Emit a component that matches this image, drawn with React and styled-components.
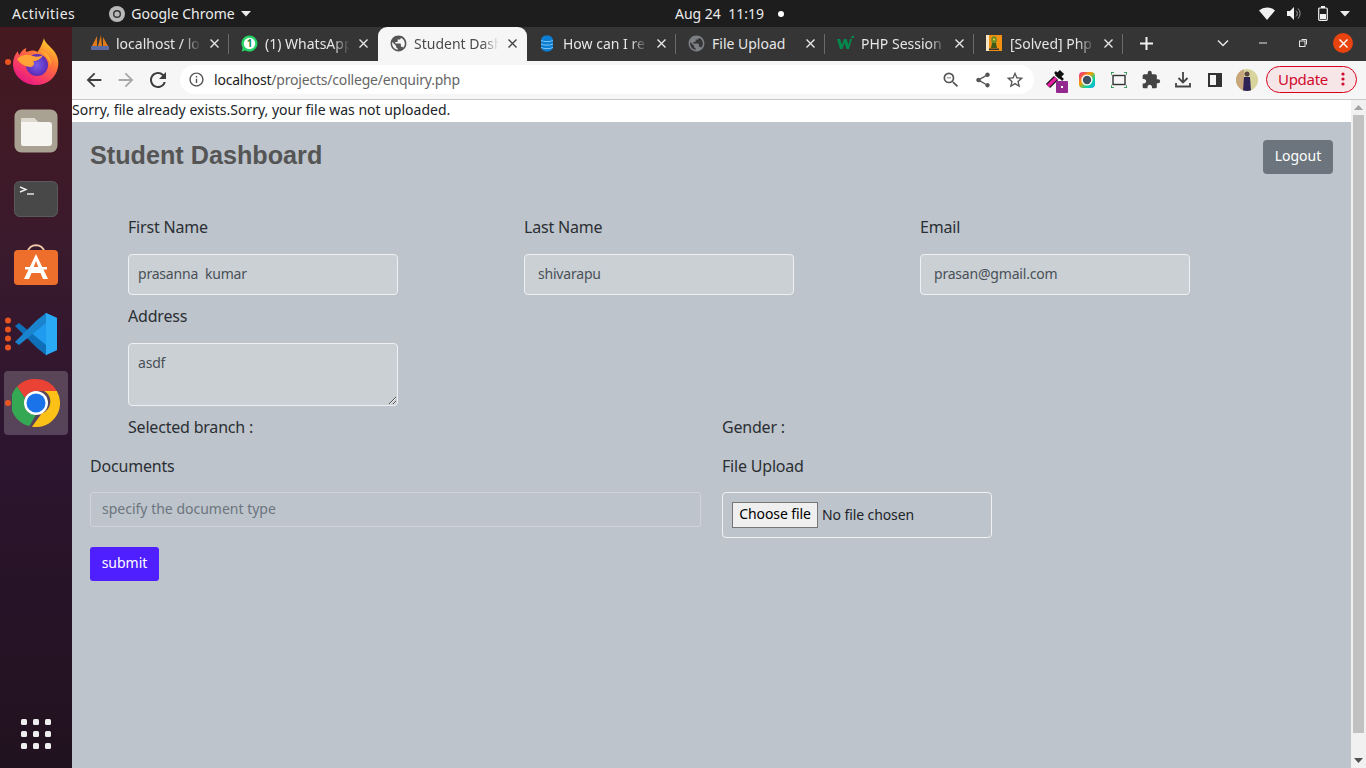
import React from 'react';
import styled, { createGlobalStyle } from 'styled-components';
import { MdExtension, MdRefresh, MdArrowBack, MdArrowForward, MdStarBorder, MdZoomOut, MdShare, MdPublic, MdInfoOutline } from 'react-icons/md';

const UI = '"Noto Sans", sans-serif';

const Global = createGlobalStyle`
  html, body { margin: 0; padding: 0; width: 1366px; height: 768px; overflow: hidden; background: #bdc4cc; }
  * { box-sizing: border-box; }
  body { font-family: ${UI}; }
`;

const Screen = styled.div`
  width: 1366px; height: 768px; display: flex; flex-direction: column; overflow: hidden;
`;
const TopBar = styled.header`
  height: 27px; flex: none; background: #1d1d1d; color: #ececec; font-size: 14px;
  display: grid; grid-template-columns: 663px auto 1fr; align-items: center; padding: 0 13px 0 12px;
`;
const TopLeft = styled.div`display: flex; align-items: center;`;
const Activities = styled.span`letter-spacing: 0.5px;`;
const AppMenu = styled.div`display: flex; align-items: center; gap: 6px; margin-left: 34px;`;
const Clock = styled.div`display: flex; align-items: center; gap: 14px; white-space: pre;`;
const Dot = styled.span`width: 6px; height: 6px; border-radius: 50%; background: #fff;`;
const Tray = styled.div`display: flex; align-items: center; justify-content: flex-end;`;
const TrayCell = styled.div`width: ${p => p.$w ?? 28}px; display: flex; justify-content: center; align-items: center;`;

const Below = styled.div`flex: 1; display: flex; min-height: 0;`;
const Dock = styled.aside`
  width: 72px; flex: none; display: flex; flex-direction: column; align-items: center;
  background: linear-gradient(180deg, #45191f 0%, #3a1a2d 30%, #2d1530 55%, #21121f 100%);
  padding-top: 3px; position: relative;
`;
const DockItem = styled.div`
  width: 64px; height: 64px; margin-bottom: ${p => p.$gap ?? 4}px; border-radius: 4px; display: flex; align-items: center; justify-content: center;
  padding-top: ${p => p.$nudge ?? 0}px;
  background: ${p => p.$active ? 'rgba(255,255,255,0.2)' : 'transparent'}; position: relative;
`;
const Pips = styled.div`
  position: absolute; left: 1px; top: 50%; transform: translateY(-50%); display: flex; flex-direction: column; gap: 3px;
`;
const Pip = styled.span`width: 6px; height: 6px; border-radius: 50%; background: #e95420;`;
const Grid9 = styled.div`
  margin-top: auto; margin-bottom: 19px; display: grid; grid-template-columns: repeat(3, 6px); gap: 6px;
`;
const GridDot = styled.span`width: 6px; height: 6px; border-radius: 1.5px; background: #eeeeee;`;

const Browser = styled.div`flex: 1; min-width: 0; display: flex; flex-direction: column;`;
const TabStrip = styled.div`
  height: 34px; flex: none; background: #353535; display: flex; align-items: stretch; padding-left: 8px; position: relative;
`;
const Tab = styled.div`
  width: 149px; flex: none; display: flex; align-items: center; padding: 0 9px 2px 12px; gap: 8px; font-size: 14px;
  color: ${p => p.$active ? '#4a4a4a' : '#e6e6e6'};
  background: ${p => p.$active ? '#f6f6f6' : 'transparent'};
  border-radius: ${p => p.$active ? '9px 9px 0 0' : '0'};
  position: relative;
  &::after {
    content: ''; display: ${p => p.$sep ? 'block' : 'none'}; position: absolute; right: 0; top: 7px; bottom: 7px; width: 1px; background: #6a6a6a;
  }
`;
const TabIcon = styled.span`
  width: 16px; height: 16px; flex: none; display: flex; align-items: center; justify-content: center; color: ${p => p.$c ?? '#555'};
  & > svg { flex: none; }
`;
const TabTitle = styled.span`
  flex: 1; overflow: hidden; white-space: nowrap; min-width: 0;
  ${p => p.$fade ? `-webkit-mask-image: linear-gradient(90deg, #000 80%, transparent 100%); mask-image: linear-gradient(90deg, #000 80%, transparent 100%);` : ''}
`;
const TabClose = styled.span`width: 11px; height: 11px; flex: none; display: flex;`;
const NewTab = styled.div`width: 46px; display: flex; align-items: center; justify-content: center; padding-bottom: 2px;`;
const WinControls = styled.div`
  margin-left: auto; display: flex; align-items: center; padding: 0 13px 2px 0;
`;
const WinBtn = styled.div`width: 40px; display: flex; align-items: center; justify-content: center;`;
const CloseCircle = styled.div`
  width: 20px; height: 20px; border-radius: 50%; background: #e9430f; display: flex; align-items: center; justify-content: center; margin-left: 10px;
`;

const Toolbar = styled.div`
  height: 39px; flex: none; background: #f6f6f6; border-bottom: 1px solid #c9c9c9; display: flex; align-items: center; padding: 0 9px 1px 6px;
`;
const NavBtn = styled.div`width: 32px; display: flex; justify-content: center; color: ${p => p.$c ?? '#3c3c3c'};`;
const Omni = styled.div`
  width: 854px; height: 29px; margin-left: 6px; background: #fff; border-radius: 15px; display: flex; align-items: center; padding: 0 9px 0 8px; font-size: 14px; color: #666;
`;
const InfoIcon = styled.span`display: flex; color: #555;`;
const Host = styled.span`color: #1c1c1c;`;
const UrlText = styled.div`margin-left: 9px; flex: 1; letter-spacing: -0.2px; padding-bottom: 1px;`;
const OmniIcons = styled.div`display: flex; gap: 13px; align-items: center; color: #555;`;
const Exts = styled.div`display: flex; align-items: center; margin-left: 5px; color: #444;`;
const ExtCell = styled.div`width: 32px; display: flex; justify-content: center; align-items: center; & > svg { flex: none; }`;
const Avatar = styled.div`width: 22px; height: 22px; border-radius: 50%; overflow: hidden; flex: none; margin-left: 5px;`;
const UpdatePill = styled.div`
  width: 91px; height: 27px; margin-left: 8px; border: 1px solid #d9001b; border-radius: 14px; background: #f7e6e8; color: #cf0a2c;
  display: flex; align-items: center; justify-content: space-between; padding: 0 11px 1px 11px; font-size: 15px; letter-spacing: -0.3px;
`;

const PageArea = styled.div`flex: 1; display: flex; min-height: 0; background: #fff;`;
const PageCol = styled.div`flex: 1; min-width: 0; display: flex; flex-direction: column;`;
const Notice = styled.div`height: 22px; flex: none; background: #fff; color: #212529; font-size: 14px; line-height: 20px; white-space: nowrap;`;
const Content = styled.main`flex: 1; background: #bdc4cc; padding: 18px 18px 0; color: #212529;`;
const HeadRow = styled.div`display: flex; justify-content: space-between; align-items: flex-start; margin-bottom: 41px;`;
const Title = styled.h1`margin: 0; font: bold 25.2px/30px "Liberation Sans", Arial, sans-serif; color: #555555;`;
const LogoutBtn = styled.button`
  width: 70px; height: 34px; border: none; border-radius: 4px; background: #6c757d; color: #fff; font: 14px ${UI}; padding: 0 0 3px; cursor: pointer;
`;
const Fields = styled.div`display: grid; grid-template-columns: repeat(3, 396px); padding-left: 38px;`;
const Field = styled.div`display: flex; flex-direction: column; align-items: flex-start;`;
const Label = styled.label`display: block; font-size: 16px; line-height: 24px; letter-spacing: -0.2px; color: #2b2f33;`;
const TextBox = styled.input`
  width: 270px; height: 41px; margin-top: 15px; margin-bottom: 9px; border: 1px solid #eef0f2; border-radius: 4px; background: #cbd0d5; color: #495057;
  font: 14px ${UI}; letter-spacing: -0.2px; padding: 0 ${p => p.$pad ?? 13}px 3px; outline: none;
`;
const TextArea = styled.textarea`
  width: 270px; height: 63px; margin-top: 15px; display: block; border: 1px solid #eef0f2; border-radius: 4px; background: #cbd0d5; color: #495057;
  font: 14px/21px ${UI}; padding: 8px 9px; outline: none; letter-spacing: -0.2px;
`;
const InfoRow = styled.div`display: grid; grid-template-columns: 632px 1fr; margin-top: 9px;`;
const InfoLabel = styled(Label)`padding-left: ${p => p.$indent ?? 0}px;`;
const DocRow = styled.div`display: grid; grid-template-columns: 611px 270px; column-gap: 21px; margin-top: 15px;`;
const DocInput = styled.input`
  width: 611px; height: 35px; margin-top: 14px; border: 1px solid #ced4da; border-radius: 3px; background: #bdc4cc; font: 14px ${UI}; padding: 0 11px 2px; color: #495057; outline: none;
  &::placeholder { color: #6c757d; opacity: 1; }
`;
const FileBox = styled.div`
  width: 270px; height: 46px; margin-top: 14px; border: 1px solid #f0f2f4; border-radius: 4px; display: flex; align-items: center; gap: 4px; padding-left: 9px; font-size: 14px; letter-spacing: -0.1px; color: #212529;
`;
const FileButton = styled.button`
  width: 86px; height: 26px; font: 14px ${UI}; letter-spacing: -0.1px; padding: 0 0 3px; background: #efefef; border: 1px solid #767676; border-radius: 0; color: #000;
`;
const FileName = styled.span`padding-bottom: 2px;`;
const SubmitBtn = styled.button`
  display: block; width: 69px; height: 34px; margin-top: 9px; border: none; border-radius: 3px; background: #4f1fff; color: #fff; font: 14px ${UI}; padding: 0 0 3px;
`;
const Scrollbar = styled.div`width: 15px; flex: none; background: #f1f1f1; display: flex; flex-direction: column; align-items: center;`;
const ScrollArrow = styled.div`height: 15px; width: 15px; flex: none; display: flex; align-items: center; justify-content: center; margin-top: ${p => p.$end ? 'auto' : '0'};`;
const Thumb = styled.div`width: 11px; height: 618px; flex: none; background: #c1c1c1;`;

const X = ({ c = '#e6e6e6' }) => (
  <svg width="11" height="11" viewBox="0 0 11 11"><path d="M1.500 1.500l8 8M9.500 1.500l-8 8" stroke={c} strokeWidth="1.4" /></svg>
);
const PmaIcon = () => (
  <svg width="18" height="16" viewBox="0 0 18 16"><path d="M1 11L6 1v10zM7 11l3-11 1 11zM12 11l0-9 5 9z" fill="#e07a1a" /><rect x="0" y="11" width="18" height="4" fill="#5b6aa0" /></svg>
);
const WaIcon = () => (
  <svg width="17" height="17" viewBox="0 0 17 17"><path d="M8.500 0.500a8 8 0 0 0-6.800 12.200L.6 16.400l3.800-1A8 8 0 1 0 8.500.5z" fill="#25d366" /><circle cx="8.500" cy="8.500" r="5.700" fill="#fff" /><text x="8.500" y="12" textAnchor="middle" fontSize="10" fontWeight="700" fontFamily="Noto Sans" fill="#128c3e">1</text></svg>
);
const DbIcon = () => (
  <svg width="16" height="17" viewBox="0 0 16 17"><rect x="2" y="0.500" width="12" height="16" rx="5" fill="#0c7fd4" /><path d="M2 5.500c3 1.500 9 1.500 12 0M2 9c3 1.500 9 1.500 12 0M2 12.500c3 1.500 9 1.500 12 0" stroke="#7fc4f2" fill="none" /></svg>
);
const W3Icon = () => (
  <svg width="17" height="14" viewBox="0 0 17 14"><path d="M0 3h3l2 6 2-6h2.500l2 6 1.500-6h2l-3 10h-2.500l-2-6-2 6H3z" fill="#04894e" /><rect x="14.500" y="0" width="2.500" height="2" fill="#04894e" /></svg>
);
const SolvedIcon = () => (
  <svg width="16" height="16" viewBox="0 0 16 16"><rect width="16" height="16" fill="#f29111" /><rect width="3" height="16" fill="#f7e6c4" /><ellipse cx="8" cy="5" rx="2.800" ry="3.800" fill="#6a8a28" /><circle cx="8" cy="4.500" r="1" fill="#e8e040" /><path d="M6 8h4l1 5H5z" fill="#3d5a1a" /><rect x="3" y="13.500" width="10" height="1.500" fill="#333" /></svg>
);
const FirefoxIcon = () => (
  <svg width="48" height="48" viewBox="0 0 48 48">
    <defs>
      <linearGradient id="ff1" x1="0.85" y1="0" x2="0.25" y2="1"><stop offset="0" stopColor="#ffe226" /><stop offset=".42" stopColor="#ff7139" /><stop offset=".8" stopColor="#f5306f" /><stop offset="1" stopColor="#e31587" /></linearGradient>
      <radialGradient id="ff2"><stop offset="0" stopColor="#7a5ce8" /><stop offset="1" stopColor="#5b2bb5" /></radialGradient>
    </defs>
    <path d="M32 0c0 4 6 8 10 13 4 5 5 11 4 16-2 11-11 18-22 18C12 47 1 38 1 26c0-5 2-10 5-13 0 2 .5 3 1.500 4 1-3 4-6 7-7-1 2-1 3 0 4 4-2 8-2 11 0 2-3 5-8 6.500-14z" fill="url(#ff1)" />
    <circle cx="25" cy="27" r="11" fill="url(#ff2)" />
    <path d="M5 21c5-5 11-5 16-3 3 1 7 1 10-1-2 4-6 6-10 6 2 2 1 5-2 6-5 0-11-3-14-8z" fill="#ffa436" />
    <path d="M28 13c7 1 12 7 11 16-1-7-5-12-11-16z" fill="#ffb032" />
  </svg>
);
const FilesIcon = () => (
  <svg width="44" height="44" viewBox="0 0 44 44">
    <rect x="0.500" y="0.500" width="43" height="43" rx="7" fill="#a9a292" />
    <path d="M7 11a2 2 0 0 1 2-2h11l4 4h11a3 3 0 0 1 3 3v18a3 3 0 0 1-3 3H9a2 2 0 0 1-2-2z" fill="#f6f5f2" />
    <path d="M7 11a2 2 0 0 1 2-2h11l4 4H7z" fill="#ded9d0" />
  </svg>
);
const TermIcon = () => (
  <svg width="44" height="36" viewBox="0 0 44 36">
    <rect x="0.500" y="0.500" width="43" height="35" rx="5" fill="#484848" stroke="#5a5a5a" />
    <path d="M6 6l6 2.500L6 11" stroke="#eee" strokeWidth="1.400" fill="none" /><path d="M13 13h7" stroke="#eee" strokeWidth="1.400" />
  </svg>
);
const StoreIcon = () => (
  <svg width="44" height="44" viewBox="0 0 44 44">
    <path d="M14 8c0-9 16-9 16 0" stroke="#f0c8a8" strokeWidth="2" fill="none" />
    <rect x="0" y="6" width="44" height="35" rx="4" fill="#ee6f2b" />
    <path d="M22 10L10 35h5l2.500-6h9l2.500 6h5zM19 25l3-8 3 8z" fill="#fff" />
    <rect x="11" y="23" width="22" height="2.500" fill="#fff" />
  </svg>
);
const VSIcon = () => (
  <svg width="44" height="44" viewBox="0 0 44 44">
    <path d="M32 1l11 5v32l-11 5L12 24z" fill="#1f9cf0" />
    <path d="M32 1L32 43 43 38V6z" fill="#2aa9f5" />
    <path d="M1 14l4-3 27 22v10l-9-7z" fill="#0f6fb8" />
    <path d="M1 30l4 3L32 11V1L23 8z" fill="#1a84cf" />
  </svg>
);
const ChromeIcon = () => (
  <svg width="48" height="48" viewBox="0 0 48 48">
    <path d="M24 0a24 24 0 0 1 20.800 12H24a12 12 0 0 0-11 7L5 7.500A24 24 0 0 1 24 0z" fill="#ea4335" />
    <path d="M5 7.500l8 11.500a12 12 0 0 0 11 17l-6.700 11.100A24 24 0 0 1 5 7.500z" fill="#34a853" />
    <path d="M44.800 12A24 24 0 0 1 20 47.700L30 34a12 12 0 0 0 2-22z" fill="#fbc116" />
    <circle cx="24" cy="24" r="12" fill="#fff" /><circle cx="24" cy="24" r="9.500" fill="#1a73e8" />
  </svg>
);

const tabs = [
  { t: 'localhost / lo', i: <PmaIcon />, fade: 1, sep: 1 },
  { t: '(1) WhatsApp', i: <WaIcon />, fade: 1 },
  { t: 'Student Dash', i: <MdPublic size={19} />, active: 1, fade: 1 },
  { t: 'How can I re', i: <DbIcon />, fade: 1, sep: 1 },
  { t: 'File Upload', i: <MdPublic size={19} />, c: '#7c7f84', sep: 1 },
  { t: 'PHP Session', i: <W3Icon />, fade: 1, sep: 1 },
  { t: '[Solved] Php', i: <SolvedIcon />, fade: 1, sep: 1 },
];

export default function App() {
  return (
    <Screen>
      <Global />
      <TopBar>
        <TopLeft>
          <Activities>Activities</Activities>
          <AppMenu>
            <svg width="16" height="16" viewBox="0 0 16 16"><circle cx="8" cy="8" r="8" fill="#b9b9b9" /><circle cx="8" cy="8" r="4" fill="#333" /><circle cx="8" cy="8" r="2.600" fill="#b9b9b9" /></svg>
            <span>Google Chrome</span>
            <svg width="10" height="6" viewBox="0 0 10 6"><path d="M0 0h10L5 5.500z" fill="#ececec" /></svg>
          </AppMenu>
        </TopLeft>
        <Clock><span>{'Aug 24  11:19'}</span><Dot /></Clock>
        <Tray>
          <TrayCell><svg width="16" height="13" viewBox="0 0 16 13"><path d="M0 3.500a12 12 0 0 1 16 0L8 13z" fill="#f2f2f2" /></svg></TrayCell>
          <TrayCell><svg width="16" height="13" viewBox="0 0 16 13"><path d="M0 4h3l4-4v13l-4-4H0z" fill="#f2f2f2" /><path d="M9 3.500a4 4 0 0 1 0 6M11 1.500a7 7 0 0 1 0 10" stroke="#9c9c9c" fill="none" /></svg></TrayCell>
          <TrayCell><svg width="10" height="15" viewBox="0 0 10 15"><rect x=".7" y="2" width="8.600" height="12.300" rx="1" stroke="#f2f2f2" strokeWidth="1.200" fill="none" /><rect x="3" y="0" width="4" height="2" fill="#f2f2f2" /><rect x="2" y="8" width="6" height="5" fill="#f2f2f2" /></svg></TrayCell>
          <TrayCell $w={16}><svg width="10" height="6" viewBox="0 0 10 6"><path d="M0 0h10L5 5.500z" fill="#ececec" /></svg></TrayCell>
        </Tray>
      </TopBar>
      <Below>
        <Dock>
          <DockItem><Pips><Pip /></Pips><FirefoxIcon /></DockItem>
          <DockItem $nudge={2}><FilesIcon /></DockItem>
          <DockItem $nudge={2}><TermIcon /></DockItem>
          <DockItem><StoreIcon /></DockItem>
          <DockItem $gap={5}><Pips><Pip /><Pip /><Pip /><Pip /></Pips><VSIcon /></DockItem>
          <DockItem $active><Pips><Pip /></Pips><ChromeIcon /></DockItem>
          <Grid9>{Array.from({ length: 9 }).map((_, i) => <GridDot key={i} />)}</Grid9>
        </Dock>
        <Browser>
          <TabStrip>
            {tabs.map(t => (
              <Tab key={t.t} $active={t.active} $sep={t.sep}>
                <TabIcon $c={t.c}>{t.i}</TabIcon>
                <TabTitle $fade={t.fade}>{t.t}</TabTitle>
                <TabClose><X c={t.active ? '#444' : '#e6e6e6'} /></TabClose>
              </Tab>
            ))}
            <NewTab><svg width="13" height="13" viewBox="0 0 13 13"><path d="M6.500 0v13M0 6.500h13" stroke="#f2f2f2" strokeWidth="2" /></svg></NewTab>
            <WinControls>
              <WinBtn><svg width="12" height="8" viewBox="0 0 12 8"><path d="M1 1.500l5 5 5-5" stroke="#e6e6e6" strokeWidth="1.500" fill="none" /></svg></WinBtn>
              <WinBtn><svg width="8" height="2" viewBox="0 0 8 2"><path d="M0 1h8" stroke="#e6e6e6" /></svg></WinBtn>
              <WinBtn><svg width="8" height="8" viewBox="0 0 8 8"><rect x=".5" y="2" width="5.500" height="5.500" stroke="#e6e6e6" fill="none" /><path d="M2.500.5h5v5" stroke="#e6e6e6" fill="none" /></svg></WinBtn>
              <CloseCircle><X c="#fff" /></CloseCircle>
            </WinControls>
          </TabStrip>
          <Toolbar>
            <NavBtn><MdArrowBack size={22} /></NavBtn>
            <NavBtn $c="#a8a8a8"><MdArrowForward size={22} /></NavBtn>
            <NavBtn><MdRefresh size={24} /></NavBtn>
            <Omni>
              <InfoIcon><MdInfoOutline size={17} /></InfoIcon>
              <UrlText><Host>localhost</Host>/projects/college/enquiry.php</UrlText>
              <OmniIcons>
                <MdZoomOut size={20} />
                <MdShare size={18} />
                <MdStarBorder size={20} />
              </OmniIcons>
            </Omni>
            <Exts>
              <ExtCell><svg width="26" height="26" viewBox="0 0 26 26"><path d="M6 19l8-8" stroke="#111" strokeWidth="6" /><path d="M6 19l8-8" stroke="#e31ea0" strokeWidth="3.500" /><path d="M15 10l5-5" stroke="#111" strokeWidth="6" /><path d="M13 5l8 8" stroke="#111" strokeWidth="2.500" /><rect x="14" y="14" width="12" height="12" rx="1" fill="#93288f" /><rect x="19" y="19" width="2" height="2" fill="#fff" /></svg></ExtCell>
              <ExtCell><svg width="16" height="16" viewBox="0 0 16 16"><defs><linearGradient id="ring" x1="0" y1="0" x2="1" y2="1"><stop offset="0" stopColor="#f0189a" /><stop offset=".4" stopColor="#f5a000" /><stop offset=".7" stopColor="#00d6a0" /><stop offset="1" stopColor="#19a5f0" /></linearGradient></defs><rect width="16" height="16" rx="4" fill="url(#ring)" /><circle cx="8" cy="8" r="5.600" fill="#fff" /><circle cx="8" cy="8" r="4.200" fill="#3f5063" /></svg></ExtCell>
              <ExtCell><svg width="16" height="16" viewBox="0 0 16 16"><rect x="2" y="3.500" width="12" height="9" stroke="#333" strokeWidth="1.400" fill="none" /><path d="M0 3V0h3M13 0h3v3M16 13v3h-3M3 16H0v-3" stroke="#0f8a3c" strokeWidth="1.400" fill="none" /></svg></ExtCell>
              <ExtCell><MdExtension size={20} /></ExtCell>
              <ExtCell><svg width="16" height="16" viewBox="0 0 16 16"><path d="M8 0v10.500M3.500 6L8 10.500 12.500 6" stroke="#444" strokeWidth="1.800" fill="none" /><path d="M1 11v3.500h14V11" stroke="#444" strokeWidth="1.800" fill="none" /></svg></ExtCell>
              <ExtCell><svg width="14" height="14" viewBox="0 0 14 14"><rect x="1" y="1" width="12" height="12" stroke="#333" strokeWidth="2" fill="none" /><rect x="8" y="1" width="5" height="12" fill="#333" /></svg></ExtCell>
            </Exts>
            <Avatar>
              <svg width="22" height="22" viewBox="0 0 22 22"><rect width="22" height="22" fill="#d8d49e" /><rect width="8" height="22" fill="#c9a77d" /><circle cx="11" cy="5" r="2.500" fill="#5a4640" /><path d="M8 8h6l1 14H7z" fill="#2d2357" /></svg>
            </Avatar>
            <UpdatePill>
              <span>Update</span>
              <svg width="4" height="14" viewBox="0 0 4 14"><circle cx="2" cy="2" r="1.600" fill="#cf0a2c" /><circle cx="2" cy="7" r="1.600" fill="#cf0a2c" /><circle cx="2" cy="12" r="1.600" fill="#cf0a2c" /></svg>
            </UpdatePill>
          </Toolbar>
          <PageArea>
            <PageCol>
              <Notice>Sorry, file already exists.Sorry, your file was not uploaded.</Notice>
              <Content>
                <HeadRow>
                  <Title>Student Dashboard</Title>
                  <LogoutBtn>Logout</LogoutBtn>
                </HeadRow>
                <Fields>
                  <Field><Label>First Name</Label><TextBox $pad={9} readOnly value="prasanna  kumar" /></Field>
                  <Field><Label>Last Name</Label><TextBox readOnly value="shivarapu" /></Field>
                  <Field><Label>Email</Label><TextBox readOnly value="prasan@gmail.com" /></Field>
                  <Field><Label>Address</Label><TextArea readOnly value="asdf" /></Field>
                </Fields>
                <InfoRow>
                  <InfoLabel $indent={38}>Selected branch :</InfoLabel>
                  <InfoLabel>Gender :</InfoLabel>
                </InfoRow>
                <DocRow>
                  <div><Label>Documents</Label><DocInput placeholder="specify the document type" /></div>
                  <div><Label>File Upload</Label><FileBox><FileButton>Choose file</FileButton><FileName>No file chosen</FileName></FileBox></div>
                </DocRow>
                <SubmitBtn>submit</SubmitBtn>
              </Content>
            </PageCol>
            <Scrollbar>
              <ScrollArrow><svg width="9" height="5" viewBox="0 0 9 5"><path d="M0 5l4.500-5L9 5z" fill="#a3a3a3" /></svg></ScrollArrow>
              <Thumb />
              <ScrollArrow $end><svg width="9" height="5" viewBox="0 0 9 5"><path d="M0 0l4.500 5L9 0z" fill="#505050" /></svg></ScrollArrow>
            </Scrollbar>
          </PageArea>
        </Browser>
      </Below>
    </Screen>
  );
}
